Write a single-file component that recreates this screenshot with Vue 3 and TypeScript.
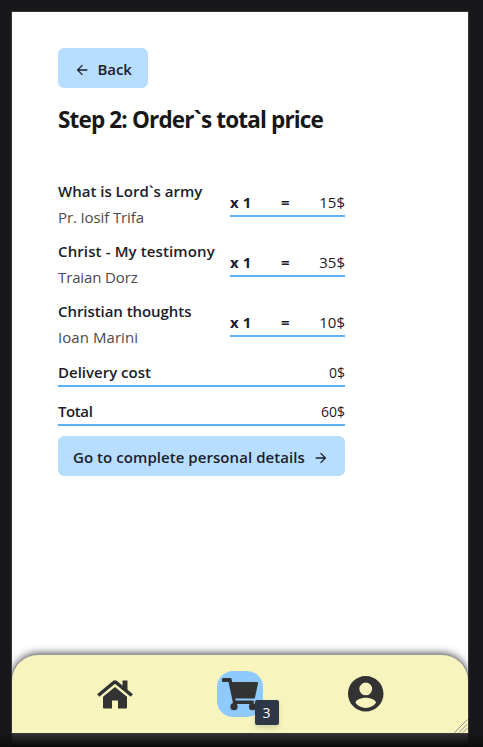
<script setup lang="ts">
interface Book {
  title: string
  author: string
  quantity: number
  price: number
  fit: string
}

const books: Book[] = [
  { title: 'What is Lord`s army', author: 'Pr. Iosif Trifa', quantity: 1, price: 15, fit: 'army' },
  { title: 'Christ - My testimony', author: 'Traian Dorz', quantity: 1, price: 35, fit: 'testimony' },
  { title: 'Christian thoughts', author: 'Ioan Marini', quantity: 1, price: 10, fit: 'thoughts' },
]
const delivery = 0
const total = books.reduce((sum, b) => sum + b.price * b.quantity, delivery)
</script>

<template>
  <div class="stage">
    <div class="screen">
      <main class="content">
        <button class="btn back">
          <svg class="arrow" viewBox="0 0 24 24"><path d="M20 11H7.83l5.59-5.59L12 4l-8 8 8 8 1.41-1.41L7.83 13H20v-2z" /></svg>
          <span class="back-text">Back</span>
        </button>
        <h1><span>Step 2: Order`s total price</span></h1>
        <section class="summary">
          <article v-for="b in books" :key="b.title" class="item">
            <div class="book" :class="b.fit">
              <div class="name">{{ b.title }}</div>
              <div class="author">{{ b.author }}</div>
            </div>
            <div class="line">
              <b class="qty">x {{ b.quantity }}</b>
              <b class="eq">=</b>
              <span class="price">{{ b.price }}$</span>
            </div>
          </article>
          <div class="sum"><span class="label">Delivery cost</span><span class="amount">{{ delivery }}$</span></div>
          <div class="sum"><span class="label total">Total</span><span class="amount">{{ total }}$</span></div>
          <button class="btn next">
            <span class="next-text">Go to complete personal details</span>
            <svg class="arrow" viewBox="0 0 24 24"><path d="M12 4l-1.41 1.41L16.17 11H4v2h12.17l-5.58 5.59L12 20l8-8z" /></svg>
          </button>
        </section>
      </main>
      <nav class="nav">
        <svg class="home" viewBox="0 0 36 29">
          <path d="M6 16.800 18 7l12 9.800V27.500q0 1-1 1h-8v-8h-6v8H7q-1 0-1-1z" />
          <path class="roof" d="M1.200 15.500 16.700 2.600q1.300-1.100 2.600 0l15.500 12.900" />
          <path d="M25.500.500h5v10l-5-4.300z" />
        </svg>
        <div class="cart">
          <svg class="cart-icon" viewBox="0 0 36 33">
            <path d="M1 0h7.500q.8 0 1 .8l.8 3.200H35q1.200 0 1 1.200l-3 14.300q-.200 1-1.200 1H13.300l.4 1.900h17.200q1.200 0 1 1.200l-.4 1.600q-.2.900-1.200.900H12.200q-1 0-1.200-1L6.500 4H1q-1 0-1-1V1q0-1 1-1z" />
            <circle cx="12" cy="28.700" r="3.600" /><circle cx="30.500" cy="28.700" r="3.600" />
          </svg>
          <span class="badge">3</span>
        </div>
        <svg class="user" viewBox="2 2 20 20"><path d="M12 2C6.480 2 2 6.480 2 12s4.480 10 10 10 10-4.480 10-10S17.520 2 12 2zm0 3.700a3.600 3.600 0 1 1 0 7.200 3.600 3.600 0 0 1 0-7.200zm0 14.300c-2.300 0-4.500-1.100-5.800-2.900.1-2 3.800-2.900 5.800-2.900s5.700.9 5.800 2.900C16.500 18.900 14.300 20 12 20z" /></svg>
        <svg class="grip" viewBox="0 0 14 14"><path d="M.5 13.500l13-13M5 13.500l8.500-8.500M9 13.500l4.500-4.500" /></svg>
      </nav>
    </div>
  </div>
</template>

<style>
body { margin: 0; background: #18181a; }
</style>

<style scoped>
* { box-sizing: border-box; }
.stage {
  height: 747px;
  padding: 12px 15px 14px 12px;
  overflow: hidden;
  background: linear-gradient(#303031, #080808) 12px 100% / 456px 13px no-repeat, linear-gradient(#18181a 733px, #0c0c0d);
  font-family: "Open Sans", "Noto Sans", sans-serif;
  font-size: 16px;
  line-height: 24px;
  color: #1a202c;
  white-space: nowrap;
}
.screen {
  display: flex;
  flex-direction: column;
  justify-content: space-between;
  height: 721px;
  background: #fff;
  box-shadow: 0 0 0 1px #363638;
}
.content { width: 333px; padding: 36px 0 0 46px; }
.btn {
  display: flex;
  align-items: center;
  height: 40px;
  padding: 1px 0 0;
  border: 0;
  border-radius: 6px;
  background: #b8deff;
  color: #1a202c;
  font: 600 15px/24px "Open Sans", sans-serif;
}
.arrow { width: 16px; height: 16px; margin-top: 3px; fill: #1a202c; }
.back { width: 90px; gap: 7.500px; padding-left: 16px; }
.next { width: 287px; margin-top: 10px; padding-left: 15px; gap: 8px; }
.back-text { letter-spacing: -.1px; }
.next-text { letter-spacing: .06px; }
h1 {
  margin: 14px 0 0;
  font-size: 22.500px;
  line-height: 36px;
  font-weight: 700;
  letter-spacing: -.84px;
  color: #171717;
}
.summary { margin-top: 41px; }
.item { display: flex; height: 60px; justify-content: space-between; }
.book { margin-top: -1px; }
.name { height: 26px; line-height: 26px; font-weight: 600; font-size: 15px; }
.author { height: 26px; line-height: 26px; font-size: 15px; letter-spacing: -.12px; color: #4a4a50; }
.testimony .name { letter-spacing: .12px; }
.thoughts .name { letter-spacing: -.06px; }
.thoughts .author { letter-spacing: .06px; }
.line {
  display: grid;
  grid-template-columns: 51px 1fr auto;
  width: 115px;
  height: 28px;
  margin-top: 10px;
  border-bottom: 2px solid #5ab2fa;
  font-size: 15px;
  line-height: 27px;
}
.qty { letter-spacing: .15px; }
.sum {
  display: flex;
  justify-content: space-between;
  height: 28px;
  margin-bottom: 11px;
  border-bottom: 2px solid #5ab2fa;
  line-height: 26px;
}
.sum + .sum { margin-bottom: 0; }
.label { font-weight: 600; font-size: 15px; }
.total { letter-spacing: -.4px; }
.amount { font-size: 14px; line-height: 28px; }
.nav {
  position: relative;
  display: flex;
  height: 78px;
  padding: 16px 84.500px 0 85px;
  justify-content: space-between;
  border-radius: 26px 26px 0 0;
  background: #f8f4be;
  box-shadow: 0 0 0 1px #99979b, 0 -1px 8px #333;
  clip-path: inset(-15px 0 0 0);
}
.home { width: 36px; height: 29px; margin-top: 8.500px; fill: #333; }
.roof { fill: none; stroke: #333; stroke-width: 3.400; }
.cart {
  position: relative;
  width: 46px;
  height: 46px;
  margin-left: -2px;
  padding: 7px 0 0 5px;
  border-radius: 16px;
  background: #8fcaff;
}
.cart-icon { display: block; width: 36px; height: 33px; fill: #333; }
.badge {
  position: absolute;
  left: 38px;
  top: 29px;
  width: 24px;
  height: 25px;
  border-radius: 2px;
  background: #2d3748;
  color: #fff;
  font-size: 14px;
  line-height: 25px;
  text-align: center;
  box-shadow: 0 3px 5px #0002;
}
.user { width: 35.500px; height: 35.500px; margin-top: 5px; fill: #333; }
.grip {
  position: absolute;
  right: 0;
  bottom: 0;
  width: 14px;
  height: 14px;
  stroke: #929296;
  stroke-width: 1;
}
</style>
